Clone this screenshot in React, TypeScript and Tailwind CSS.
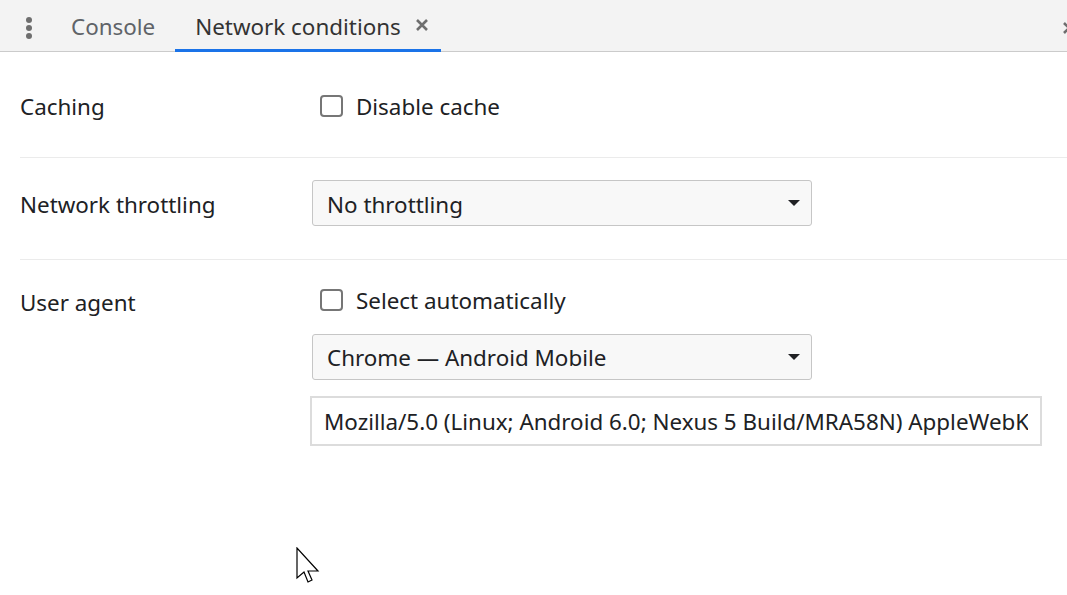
export default function App() {
  const font = { fontFamily: '"Noto Sans", "Open Sans", sans-serif' };

  return (
    <div
      className="relative h-[595px] w-[1067px] overflow-hidden bg-white text-[22.4px] leading-[30px] text-[#202124]"
      style={font}
    >
      {/* Tab strip */}
      <div className="flex h-[52px] items-stretch border-b border-[#cbcbcb] bg-[#f3f3f3]">
        <div className="flex w-[58px] items-center justify-center pt-[4px]">
          <svg width="8" height="22" viewBox="0 0 8 22">
            <circle cx="4" cy="3" r="3" fill="#6e6e6e" />
            <circle cx="4" cy="11" r="3" fill="#6e6e6e" />
            <circle cx="4" cy="19" r="3" fill="#6e6e6e" />
          </svg>
        </div>
        <div className="flex items-center pl-[13px] pr-[20px] pt-[3px] text-[#5f6368]">
          Console
        </div>
        <div className="relative flex items-center gap-[14px] pl-[20px] pr-[12px] pt-[3px] text-[#333]">
          <span>Network conditions</span>
          <svg width="14" height="14" viewBox="0 0 14 14" className="-mt-[4px]">
            <path d="M2 2 L12 12 M12 2 L2 12" stroke="#6e6e6e" strokeWidth="2.6" />
          </svg>
          <div className="absolute bottom-[-1px] left-0 right-0 h-[3px] bg-[#1a73e8]" />
        </div>
        <div className="flex-1" />
        <div className="flex w-[5px] items-center overflow-hidden pt-[4px]">
          <svg width="14" height="14" viewBox="0 0 14 14" className="shrink-0">
            <path d="M2 2 L12 12 M12 2 L2 12" stroke="#6e6e6e" strokeWidth="2.6" />
          </svg>
        </div>
      </div>

      {/* Settings */}
      <div className="pl-[20px]">
        {/* Caching */}
        <div className="flex h-[106px] items-start border-b border-[#ebebeb] pt-[40px]">
          <div className="w-[300px]">Caching</div>
          <label className="-mt-[1px] flex h-[30px] items-center gap-[13px]">
            <span className="h-[22px] w-[23px] rounded-[4px] border-2 border-[#767676] bg-white" />
            <span className="pt-[1px]">Disable cache</span>
          </label>
        </div>

        {/* Network throttling */}
        <div className="flex h-[102px] items-start border-b border-[#ebebeb]">
          <div className="w-[292px] pt-[32px]">Network throttling</div>
          <div className="mt-[22px] flex h-[46px] w-[500px] items-center justify-between rounded-[3px] border border-[#c6c6c6] bg-[#f8f8f8] pl-[14px] pr-[11px]">
            <span className="pt-[3px]">No throttling</span>
            <svg width="12" height="6" viewBox="0 0 12 6">
              <path d="M0 0 H12 L6 6 Z" fill="#202124" />
            </svg>
          </div>
        </div>

        {/* User agent */}
        <div className="flex">
          <div className="w-[292px] pt-[28px]">User agent</div>
          <div className="flex flex-col pt-[25px]">
            <label className="ml-[8px] flex h-[30px] items-center gap-[13px]">
              <span className="h-[22px] w-[23px] rounded-[4px] border-2 border-[#767676] bg-white" />
              <span className="pt-[1px]">Select automatically</span>
            </label>
            <div className="mt-[19px] flex h-[46px] w-[500px] items-center justify-between rounded-[3px] border border-[#c6c6c6] bg-[#f8f8f8] pl-[14px] pr-[11px]">
              <span className="pt-[2px]">Chrome — Android Mobile</span>
              <svg width="12" height="6" viewBox="0 0 12 6">
                <path d="M0 0 H12 L6 6 Z" fill="#202124" />
              </svg>
            </div>
            <input
              readOnly
              value="Mozilla/5.0 (Linux; Android 6.0; Nexus 5 Build/MRA58N) AppleWebKit/537.36 (KHTML, like Gecko) Chrome/143.0.0.0 Mobile Safari/537.36"
              className="-ml-[2px] mt-[16px] h-[50px] w-[732px] border-2 border-[#dcdcdc] bg-white px-[12px] text-[#202124] outline-none"
              style={font}
            />
          </div>
        </div>
      </div>

      {/* Mouse cursor */}
      <svg
        width="26"
        height="40"
        viewBox="0 0 26 40"
        className="absolute left-[296px] top-[547px]"
      >
        <path
          d="M1 1 L1 31 L8 25 L12 35 L16 33 L12 24 L22 24 Z"
          fill="#fff"
          stroke="#000"
          strokeWidth="1.2"
          strokeLinejoin="miter"
        />
      </svg>
    </div>
  );
}
